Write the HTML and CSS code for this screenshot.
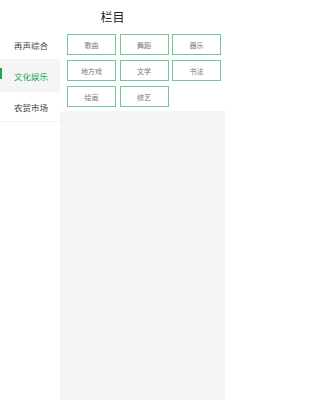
FILE: index.html
```html
<!DOCTYPE html>
<html lang="zh">
<head>
<meta charset="utf-8">
<title>栏目</title>
<link rel="stylesheet" href="styles.css">
</head>
<body>
<div class="page">
  <header class="header">栏目</header>
  <div class="main">
    <nav class="sidebar">
      <div class="side-item">再声综合</div>
      <div class="side-item active">文化娱乐</div>
      <div class="side-item">农贸市场</div>
    </nav>
    <section class="content">
      <div class="tags">
        <div class="tag">歌曲</div>
        <div class="tag">舞蹈</div>
        <div class="tag">器乐</div>
        <div class="tag">地方戏</div>
        <div class="tag">文学</div>
        <div class="tag">书法</div>
        <div class="tag">绘画</div>
        <div class="tag">综艺</div>
      </div>
    </section>
  </div>
</div>
</body>
</html>
```

FILE: styles.css
```css
html, body {
  margin: 0;
  padding: 0;
  background: #ffffff;
}
body {
  font-family: "Noto Sans CJK SC", "Noto Sans", sans-serif;
}
.page {
  width: 225px;
  height: 400px;
  display: flex;
  flex-direction: column;
}
.header {
  height: 30px;
  flex: none;
  display: flex;
  align-items: center;
  justify-content: center;
  padding-top: 3px;
  box-sizing: border-box;
  font-size: 12px;
  color: #222222;
  background: #ffffff;
}
.main {
  flex: 1;
  display: flex;
}
.sidebar {
  width: 60px;
  flex: none;
  background: #ffffff;
}
.side-item {
  position: relative;
  height: 30px;
  box-sizing: border-box;
  border-bottom: 1px solid #f3f3f3;
  display: flex;
  align-items: center;
  padding-left: 14px;
  font-size: 8.5px;
  color: #444444;
}
.side-item.active {
  background: #f5f5f5;
  color: #23a35a;
  height: 32px;
}
.side-item.active::before {
  content: "";
  position: absolute;
  left: 0;
  top: 8px;
  width: 2px;
  height: 11px;
  background: #23a35a;
}
.content {
  flex: 1;
  background: #f5f5f5;
}
.tags {
  background: #ffffff;
  display: grid;
  grid-template-columns: repeat(3, 1fr);
  gap: 5px 3.5px;
  padding: 4px 4px 4px 7px;
}
.tag {
  height: 21px;
  box-sizing: border-box;
  border: 1px solid #72c69a;
  display: flex;
  align-items: center;
  justify-content: center;
  font-size: 7px;
  color: #777777;
}
```
